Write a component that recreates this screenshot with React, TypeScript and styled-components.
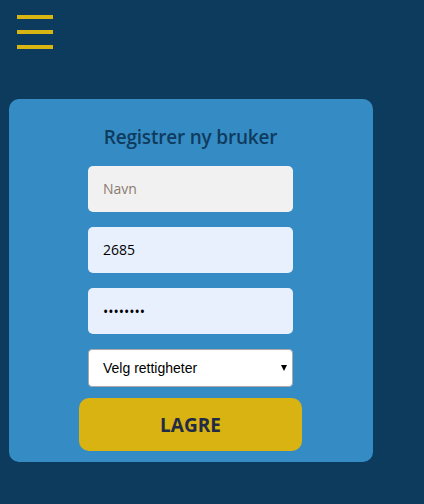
import React, { FC } from 'react';
import styled, { createGlobalStyle } from 'styled-components';

const GlobalStyle = createGlobalStyle`
  html, body {
    margin: 0;
    padding: 0;
    background: #0d3b5e;
    min-height: 100%;
  }
  body {
    font-family: "Open Sans", "Liberation Sans", sans-serif;
  }
`

const Page = styled.div`
  width: 424px;
  height: 504px;
  background: #0d3b5e;
  box-sizing: border-box;
  padding: 15px 0 0 9px;
`

const MenuButton = styled.button`
  display: flex;
  flex-direction: column;
  gap: 11px;
  margin-left: 8px;
  padding: 0;
  border: 0;
  background: transparent;
  cursor: pointer;
`

const MenuBar = styled.span`
  display: block;
  width: 36px;
  height: 4px;
  background: #d9b513;
`

const Card = styled.form`
  margin-top: 50px;
  width: 364px;
  height: 363px;
  box-sizing: border-box;
  background: #358cc4;
  border-radius: 10px;
  padding: 24px 1px 11px 0;
  display: flex;
  flex-direction: column;
  align-items: center;
`

const Title = styled.h2`
  margin: 0 0 15px;
  font-family: "Open Sans", "Liberation Sans", sans-serif;
  font-weight: 600;
  font-size: 19px;
  line-height: 28px;
  color: #0f3b5f;
  letter-spacing: -0.2px;
`

const Field = styled.input<{ $filled?: boolean }>`
  width: 205px;
  height: 46px;
  box-sizing: border-box;
  margin-bottom: 15.5px;
  border: 0;
  border-radius: 5px;
  padding: 0 15px;
  background: ${props => props.$filled ? '#e8f0fe' : '#f1f1f1'};
  font-family: "Open Sans", "Liberation Sans", sans-serif;
  font-size: 14px;
  color: #000;
  outline: none;
  &::placeholder {
    color: #8a7b70;
  }
`

const SelectWrap = styled.div`
  position: relative;
  width: 205px;
  margin-bottom: 11px;
  &::after {
    content: '';
    position: absolute;
    right: 6px;
    top: 16px;
    border-left: 3.5px solid transparent;
    border-right: 3.5px solid transparent;
    border-top: 6px solid #000;
    pointer-events: none;
  }
`

const Select = styled.select`
  width: 205px;
  height: 38px;
  box-sizing: border-box;
  appearance: none;
  border: 1px solid #a9a9a9;
  border-radius: 4px;
  background: #fff;
  padding: 0 14px;
  font-family: "Liberation Sans", Arial, sans-serif;
  font-size: 14px;
  color: #000;
  outline: none;
`

const SaveButton = styled.button`
  width: 223px;
  height: 53px;
  border: 0;
  border-radius: 10px;
  background: #d8b311;
  color: #222b45;
  font-family: "Open Sans", "Liberation Sans", sans-serif;
  font-weight: 700;
  font-size: 19px;
  cursor: pointer;
`

const App: FC = () => {
  return (
    <Page>
      <GlobalStyle />
      <MenuButton type="button" aria-label="Meny">
        <MenuBar />
        <MenuBar />
        <MenuBar />
      </MenuButton>
      <Card onSubmit={e => e.preventDefault()}>
        <Title>Registrer ny bruker</Title>
        <Field placeholder="Navn" />
        <Field $filled defaultValue="2685" />
        <Field $filled type="password" defaultValue="passord1" />
        <SelectWrap>
          <Select defaultValue="">
            <option value="">Velg rettigheter</option>
            <option value="admin">Admin</option>
            <option value="bruker">Bruker</option>
          </Select>
        </SelectWrap>
        <SaveButton type="submit">LAGRE</SaveButton>
      </Card>
    </Page>
  )
}

export default App
